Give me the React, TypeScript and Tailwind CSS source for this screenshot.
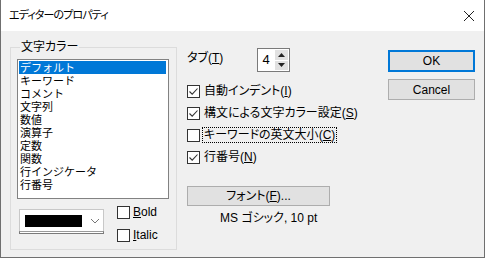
import React from "react";

const ui = "font-['Liberation_Sans','Noto_Sans_CJK_JP',sans-serif] [font-feature-settings:'palt']";

const colorNames = [
  "デフォルト",
  "キーワード",
  "コメント",
  "文字列",
  "数値",
  "演算子",
  "定数",
  "関数",
  "行インジケータ",
  "行番号",
];

function CheckBox({ checked }: { checked?: boolean }) {
  return (
    <div className="flex h-[13px] w-[13px] shrink-0 items-center justify-center border border-[#333333] bg-white">
      {checked && (
        <svg width="11" height="11" viewBox="0 0 11 11">
          <path d="M1.5 5.5 L4.2 8.2 L9.5 2.5" fill="none" stroke="#333333" strokeWidth="1.1" />
        </svg>
      )}
    </div>
  );
}

function Option({
  checked,
  before,
  mnemonic,
  focused,
}: {
  checked?: boolean;
  before: string;
  mnemonic: string;
  focused?: boolean;
}) {
  return (
    <div className="flex h-[22px] items-center">
      <CheckBox checked={checked} />
      <span
        className={
          "ml-[3px] px-[1px] leading-[14px] " +
          (focused ? "outline outline-1 outline-dotted outline-black" : "")
        }
      >
        {before}(<span className="underline underline-offset-[1px]">{mnemonic}</span>)
      </span>
    </div>
  );
}

export default function App() {
  return (
    <div
      className={
        "flex h-[258px] w-[485px] flex-col border-x border-b border-[#6f6f6f] bg-[#f0f0f0] text-[12px] text-black " +
        ui
      }
    >
      {/* title bar */}
      <div className="flex h-[31px] shrink-0 items-center bg-white pl-[8px] pr-[9px]">
        <span className="text-[11px] tracking-[-0.9px]">エディターのプロパティ</span>
        <svg className="ml-auto" width="12" height="12" viewBox="0 0 12 12">
          <path d="M1 1 L11 11 M11 1 L1 11" stroke="#222222" strokeWidth="1" />
        </svg>
      </div>

      <div className="flex flex-1">
        {/* 文字カラー group */}
        <div className="relative ml-[9px] mt-[16px] h-[203px] w-[167px] shrink-0 border border-[#dcdcdc]">
          <span className="absolute left-[9px] top-[-9px] bg-[#f0f0f0] px-[1px] leading-[16px]">
            文字カラー
          </span>
          <div className="ml-[6px] mt-[11px] h-[140px] w-[152px] border border-[#828282] bg-white pl-[1px] pt-[1px] font-['Noto_Sans_CJK_JP',sans-serif] text-[11px] leading-[13px] [font-feature-settings:normal]">
            {colorNames.map((name, i) => (
              <div
                key={name}
                className={
                  "h-[13px] w-[147px] pl-[1px] " +
                  (i === 0 ? "bg-[#0078d7] text-white" : "")
                }
              >
                {name}
              </div>
            ))}
          </div>
          <div className="ml-[8px] mt-[7px] flex">
            <div className="mt-[3px] flex h-[25px] w-[85px] flex-col bg-white">
              <div className="flex h-[22px] items-center border-x border-t border-[#c8c8c8] pl-[5px]">
                <div className="h-[12px] w-[57px] bg-black" />
                <svg className="ml-[8px]" width="10" height="6" viewBox="0 0 10 6">
                  <path d="M1 1 L5 5 L9 1" fill="none" stroke="#666666" strokeWidth="0.9" />
                </svg>
              </div>
              <div className="h-[3px] border-y border-x border-[#7a7a7a] border-t-[#9a9a9a] bg-white" />
            </div>
            <div className="ml-[13px] flex flex-col gap-[10px]">
              <div className="flex items-center">
                <CheckBox />
                <span className="ml-[3px] leading-[13px]">
                  <span className="underline underline-offset-[1px]">B</span>old
                </span>
              </div>
              <div className="flex items-center">
                <CheckBox />
                <span className="ml-[3px] leading-[13px]">
                  <span className="underline underline-offset-[1px]">I</span>talic
                </span>
              </div>
            </div>
          </div>
        </div>

        {/* options */}
        <div className="ml-[10px] flex w-[143px] shrink-0 flex-col">
          <div className="mt-[17px] flex h-[24px]">
            <span className="mt-[3px] w-[70px] leading-[14px]">
              タブ(<span className="underline underline-offset-[1px]">T</span>)
            </span>
            <div className="flex h-[24px] border border-[#7a7a7a] bg-white">
              <div className="flex w-[16px] items-center justify-center text-[13px]">4</div>
              <div className="flex w-[15px] flex-col gap-[1px] p-[1px]">
                <div className="flex flex-1 items-center justify-center bg-[#e1e1e1]">
                  <svg width="7" height="4" viewBox="0 0 7 4">
                    <path d="M0 4 L3.5 0 L7 4 Z" fill="#222222" />
                  </svg>
                </div>
                <div className="flex flex-1 items-center justify-center bg-[#e1e1e1]">
                  <svg width="7" height="4" viewBox="0 0 7 4">
                    <path d="M0 0 L3.5 4 L7 0 Z" fill="#222222" />
                  </svg>
                </div>
              </div>
            </div>
          </div>
          <div className="mt-[8px] flex flex-col whitespace-nowrap">
            <Option checked before="自動インデント" mnemonic="I" />
            <Option checked before="構文による文字カラー設定" mnemonic="S" />
            <Option before="キーワードの英文大小" mnemonic="C" focused />
            <Option checked before="行番号" mnemonic="N" />
          </div>
          <div className="mt-[18px] flex h-[20px] w-[143px] items-center justify-center border border-[#adadad] bg-[#e1e1e1]">
            フォント(<span className="underline underline-offset-[1px]">F</span>)...
          </div>
          <div className="mt-[5px] whitespace-nowrap pl-[33px] leading-[14px]">MS ゴシック, 10 pt</div>
        </div>

        {/* buttons */}
        <div className="ml-auto mr-[9px] mt-[19px] flex w-[87px] flex-col gap-[7px]">
          <div className="flex h-[22px] items-center justify-center border-2 border-[#0078d7] bg-[#e1e1e1]">
            OK
          </div>
          <div className="flex h-[21px] items-center justify-center border border-[#adadad] bg-[#e1e1e1]">
            Cancel
          </div>
        </div>
      </div>
    </div>
  );
}
